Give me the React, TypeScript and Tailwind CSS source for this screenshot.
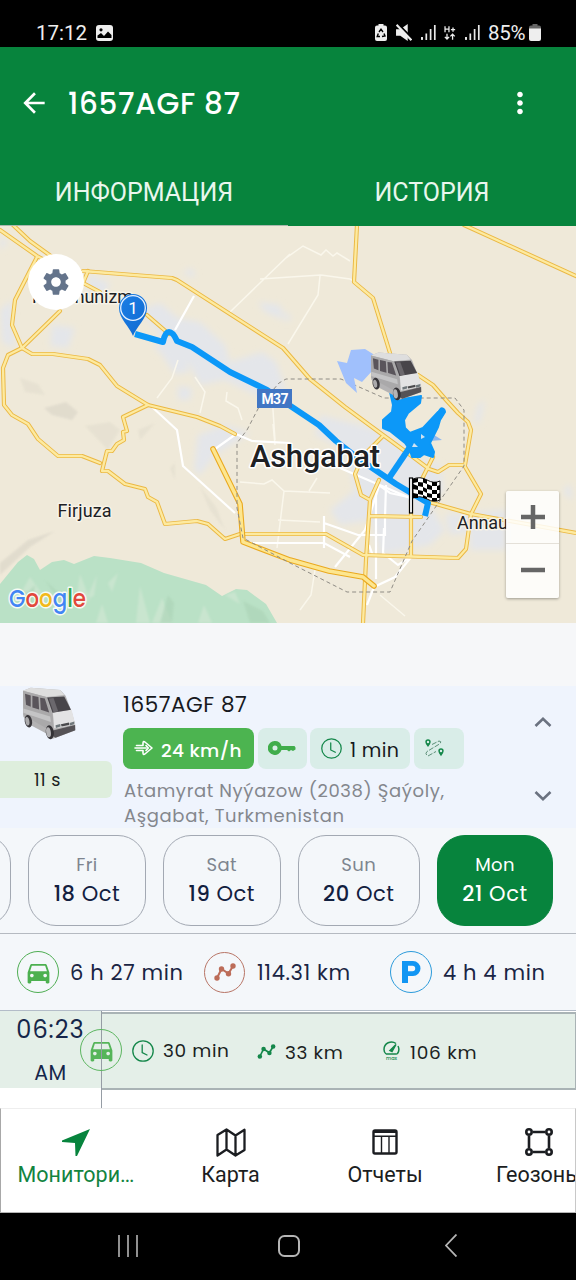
import React from "react";
import { MdArrowBack, MdDirectionsCar, MdMoreVert, MdNearMe, MdSettings } from "react-icons/md";

const POPPINS = "font-[Poppins,Inter,sans-serif]";

function Van({ className }: { className?: string }) {
  return (
    <svg className={className} viewBox="66 36 161 158" preserveAspectRatio="none">
      <path d="M69 47 L92 38 L180 45 L196 62 L214 110 L225 150 L224 166 L158 190 L133 172 L88 148 L70 125Z" fill="#b4b3b4" />
      <path d="M69 47 L92 38 L180 45 L192 60 L139 66Z" fill="#dedede" />
      <path d="M139 66 L160 130 L158 165 L140 160 L70 120 L69 47Z" fill="#aaa9aa" />
      <path d="M70 100 L150 124 L152 140 L70 113Z" fill="#c4c4c5" />
      <path d="M158 112 L214 104 L225 148 L162 160Z" fill="#e3e3e4" />
      <path d="M141 67 L192 64 L212 104 L157 113Z" fill="#48454a" />
      <path d="M146 70 L160 69 L174 109 L160 111Z" fill="#6b686d" />
      <path d="M75 56 L92 61 L92 95 L78 89Z M97 62 L115 66 L117 103 L97 97Z M120 68 L134 70 L147 112 L122 104Z" fill="#5a555b" />
      <path d="M166 150 L180 146 L181 154 L167 158Z M208 143 L222 139 L222 147 L209 151Z" fill="#6f777b" />
      <path d="M182 147 L206 142 L207 149 L184 154Z" fill="#4a4a4d" />
      <path d="M158 166 L224 149 L225 165 L166 187 L157 181Z" fill="#555256" />
      <ellipse cx="85" cy="138" rx="11" ry="19" fill="#38363a" transform="rotate(-10 85 138)" />
      <ellipse cx="82" cy="138" rx="6" ry="13" fill="#aaa9ab" transform="rotate(-10 82 138)" />
      <ellipse cx="149" cy="171" rx="12" ry="21" fill="#343236" transform="rotate(-8 149 171)" />
      <ellipse cx="145" cy="171" rx="7" ry="15" fill="#b5b4b6" transform="rotate(-8 145 171)" />
    </svg>
  );
}

const ROADS = [
  "M0 230L37 256L52 264", "M13 225L30 241L55 259", "M83 271L172 278L177 280L283 348L290 356L310 379L345 407L368 424L413 457L429 469L438 472L449 465L464 465L481 494L471 514L466 549L458 558L363 555L326 534L244 534",
  "M83 283L100 292M147 315L169 334M83 283L88 271", "M37 257L15 300L12 325L22 348L60 311", "M22 348L8 355L3 368L4 405L12 415L28 424L38 439L58 456L82 456L100 463",
  "M22 348L32 354L53 354L88 359L100 365L117 386L148 405L197 417L220 426L235 434",
  "M148 405L123 417L127 431L123 432L124 440L117 444L112 451L107 451L102 471L108 471L125 484L145 489L148 497L157 502L165 524L197 521L208 524L225 539L240 534",
  "M357 225L354 282L373 298L390 353M418 375L433 385L447 401L458 413L468 422L471 430L465 465", "M464 225L576 276", "M429 502L471 514L576 533",
  "M383 436L363 456L355 474L361 495L370 500M379 480L370 500L366 560L363 623M369 516L421 517M411 500V556M433 457L421 481",
];

const ARTERIES = [
  "M213 449L240 504L243 542L290 560L329 571L363 577L374 586", 
];

const WHITE_ROADS = [
  "M194 296L175 330", "M151 406L177 430L183 466L235 513", "M215 449L236 434L252 441L290 443", "M244 543L324 543L350 557", "M340 468L375 483L410 498M379 486L365 530L335 567", "M376 486V579M376 483L390 493L408 497M324 523L358 535H385V518L386 485M324 516V548M369 545L373 556M383 553L398 565L412 556",
  "M384 528L383 554M374 587L395 577L412 556M374 587L367 605",
];

const THIN = [
  "M290 254L230 312M260 279L321 275L350 279L354 281M286 258L303 246L321 255L326 250L333 256L337 253L350 261M320 276L318 295L288 344",
  "M178 360L172 378L157 398M195 377L205 392L200 413M227 392L226 401L238 408L242 420", "M272 395L275 440M275 445L273 424M240 482L264 484L272 480L284 491L330 493M284 491L277 548M278 520L320 522M309 491L317 478",
  "M315 570L311 595L300 610M380 595L405 616",
];

function CityMap() {
  return (
    <svg className="block h-[397px] w-full" viewBox="0 226 576 397">
      <defs>
        <filter id="soft"><feGaussianBlur stdDeviation="3" /></filter>
        <filter id="soft2"><feGaussianBlur stdDeviation="1.2" /></filter>
        <linearGradient id="pin" x2="1" y2="1"><stop stopColor="#1c7fe6" /><stop offset="1" stopColor="#0f69d0" /></linearGradient>
      </defs>
      <rect y="226" width="576" height="397" fill="#efe9d9" />
      <g fill="#e4e6ea" filter="url(#soft)">
        <path d="M0 236L8 243L0 250Z M0 310L12 300L14 348L2 342Z M52 325L75 328L68 348L50 346Z M88 275L110 283L104 296L88 290Z" />
        <path d="M140 310L160 303L178 318L200 322L225 345L230 362L262 352L276 362L286 390L262 398L225 380L200 385L190 365L155 350L160 335Z M160 352L185 360L190 372L175 374Z M178 386L192 388L190 400L178 400Z" />
        <path d="M258 302L280 305L284 320L265 312Z M283 310L292 318L286 322Z M182 273L192 268L196 278Z M198 435L225 425L250 433L215 455L200 475L194 470Z" />
        <path d="M320 415L360 425L390 435L420 460L440 465L444 490L430 505L445 530L430 545L380 555L372 520L340 525L330 510L355 490L345 450L315 435Z" />
        <path d="M445 515L506 510V550H470V532L450 535Z M478 405L485 400L480 422L474 424Z M564 489L570 484L573 500L565 495Z" />
      </g>
      <g fill="#ddd8ca" filter="url(#soft2)" opacity=".75">
        <path d="M20 378L38 384L45 395L25 392Z M85 426L110 422L120 430L108 450Z M200 487L216 507L225 530L210 510Z M138 430L155 423L140 440Z M170 468L175 463V480Z" opacity=".6" />
        <path d="M44 408L66 402L78 412L72 420L52 415Z M0 563L28 540L55 531L30 547L0 575Z" />
      </g>
      <path d="M0 584L18 562L27 555L34 559L40 570L52 562L64 560L74 564L94 556L110 558L141 563L164 573L206 585L222 596L236 589L247 590L266 604L277 623H0Z" fill="#bae1c6" />
      <path d="M30 577L42 594L22 591Z M80 574L90 600L75 606Z M118 573L112 592L108 583Z M97 575L86 600L94 596Z M140 586L150 623H136Z M162 598L172 623H152Z M102 604L108 623H96Z M204 605L212 623H198Z M225 595L240 604L235 592Z" fill="#c9e5cf" filter="url(#soft2)" />
      <path d="M45 580L60 603L66 600Z M168 595L174 603L172 623H160Z M243 601L263 611L270 623H250Z M20 600L35 585L32 605Z" fill="#abd3b6" filter="url(#soft2)" opacity=".6" />

      {THIN.map((d) => <path key={d} d={d} fill="none" stroke="#faf7ec" strokeWidth="1.500" />)}
      {WHITE_ROADS.map((d) => <path key={d} d={d} fill="none" stroke="#ffffff" strokeWidth="2.200" />)}
      <g fill="none" strokeLinejoin="round" strokeLinecap="round">
        {ROADS.map((d) => <path key={d} d={d} stroke="#ebb843" strokeWidth="4.200" />)}
        {ROADS.map((d) => <path key={d} d={d} stroke="#fdeaa0" strokeWidth="2.300" />)}
        {ARTERIES.map((d) => <path key={d} d={d} stroke="#eaa91f" strokeWidth="5.600" />)}
        {ARTERIES.map((d) => <path key={d} d={d} stroke="#fde68f" strokeWidth="3.400" />)}
      </g>
      <path d="M247 430L260 405L279 383L286 379H341L384 398H455L464 410V466L412 541L390 592H347L290 563L243 538L237 508V443L247 430" fill="none" stroke="#8f8c85" strokeWidth="1" strokeDasharray="4 3" />

      <path d="M337 361L347 363L351 350L365 349L373 354V370L362 382L354 378L357 393L346 383Z" fill="#a0c0fc" />
      <path d="M431 433L442 440L430 441Z" fill="#8fb8ef" />

      <g fill="none" stroke="#0c98f8" strokeWidth="6" strokeLinejoin="round">
        <path d="M135 334L163 342Q165 332 169 332T177 341L192 347L230 372L267 390L286 403L319 425L336 441L359 459L396 484L428 503L425 516" />
        <path d="M389 478L410 447" />
        <path d="M442 411L425 438M432 425L420 440" strokeWidth="7" strokeLinecap="round" />
      </g>
      <path d="M390 392L393 405L392 412L383 420L383 428L390 431L405 443L410 450L412 457L420 457L424 454L433 457L434 452L430 443L438 427L440 420L445 412L443 409L438 412L423 428L410 433L405 428L404 420L408 413L420 403L421 396L398 400Z" fill="#0c98f8" stroke="#0c98f8" strokeWidth="2" strokeLinejoin="round" />
      <path d="M414 443L418 447H412Z M421 434L425 437L421 439Z" fill="#cfe2f2" />

      <g className="font-[Roboto,sans-serif]" fill="#202124" stroke="#f7f3e8" strokeWidth="3" strokeLinejoin="round" paintOrder="stroke">
        <text x="32" y="303" fontSize="18" textLength="101">Kommunizm</text>
        <text x="57.500" y="517" fontSize="18" textLength="54">Firjuza</text>
        <text x="457" y="529" fontSize="18" textLength="51">Annau</text>
        <text x="250" y="467" fontSize="31" fontWeight="500" textLength="130" stroke="#ffffff">Ashgabat</text>
      </g>

      <rect x="257" y="389" width="35" height="19" fill="#4176c4" />
      <text x="261.500" y="404" className="font-[Roboto,sans-serif]" fontSize="14" fontWeight="700" fill="#fff" textLength="27">M37</text>

      <path d="M133 336C130 327 119 319 119 308A14 14 0 0 1 147 308C147 319 136 327 133 336Z" fill="url(#pin)" />
      <circle cx="133" cy="308" r="12.300" fill="none" stroke="#e6f1ff" strokeWidth="1.300" />
      <text x="133" y="314" className="font-[Roboto,sans-serif]" fontSize="17" fill="#fff" textAnchor="middle">1</text>

      <circle cx="56" cy="282" r="28" fill="#fff" />

      <g>
        <rect x="409.500" y="478" width="3" height="35" fill="#fff" stroke="#000" strokeWidth="1.200" />
        <path d="M413 479Q420 476 427 480T440 481V500Q434 503 427 499T413 498Z" fill="#fff" stroke="#111" strokeWidth="1" />
        <path d="M413 479L418 478V482L413 483ZM423 478L427 480V484L423 482.500ZM432 482L437 482V486L432 486ZM418 482L423 482.500V487L418 486ZM427 484L432 486V490L427 489ZM437 486L440 485V490L437 490ZM413 484L418 486V490L413 489ZM423 487L427 489V493L423 491ZM432 490H437V494H432ZM418 490L423 491V495L418 494ZM427 493L432 494V498L427 497ZM437 494L440 493V498L437 498ZM413 493L418 494V498L413 498ZM423 495L427 497V499L423 498ZM432 498H437V501L432 501Z" fill="#000" />
      </g>

      <g className="font-[Poppins,sans-serif]" fontSize="24" fontWeight="500" stroke="#f6fbf4" strokeWidth="3" strokeLinejoin="round" paintOrder="stroke">
        <text x="9" y="607" textLength="77" lengthAdjust="spacingAndGlyphs">
          <tspan fill="#4285f4">G</tspan><tspan fill="#e2483c">o</tspan><tspan fill="#f2b91b">o</tspan><tspan fill="#4285f4">g</tspan><tspan fill="#34a853">l</tspan><tspan fill="#e2483c">e</tspan>
        </text>
      </g>
    </svg>
  );
}

function Bars() {
  return (
    <svg className="h-[16px] w-[15px]" viewBox="0 0 15 16">
      <path d="M1 13v3M5.300 9.500V16M9.600 5V16M13.800 1V16" stroke="#e8e8e8" strokeWidth="1.700" />
      <path d="M0 14.200h2" stroke="#e8e8e8" strokeWidth="2" />
    </svg>
  );
}

function StatusBar() {
  return (
    <div className="flex h-[47px] shrink-0 items-start bg-black pl-[36px] pr-[35px] pt-[19.500px] font-[Roboto,sans-serif] text-[20.500px] leading-[26px] text-[#eeeeee]">
      <span className="w-[60px] whitespace-nowrap">17:12</span>
      <svg className="mt-[5px] h-[16px] w-[17px]" viewBox="0 0 17 16">
        <rect width="17" height="16" rx="3" fill="#eee" />
        <circle cx="5" cy="4.800" r="1.600" fill="#000" />
        <path d="M1.500 13V10.500L5 8L8 11L12 6.500L15.500 10V13Z" fill="#000" />
      </svg>
      <div className="ml-auto flex items-start">
        <svg className="mt-[4px] h-[17px] w-[12px]" viewBox="0 0 12 17">
          <path d="M3.500 1.500V0h5v1.500H10a2 2 0 0 1 2 2V15a2 2 0 0 1-2 2H2a2 2 0 0 1-2-2V3.500a2 2 0 0 1 2-2Z" fill="#eee" />
          <path d="M4 8L6 5.200L8 8M9 9.500L10 12L7 12.500M5 12.500H2.200L3.300 9.500" fill="none" stroke="#000" strokeWidth="1.400" />
        </svg>
        <svg className="ml-[9px] mt-[4px] h-[17px] w-[16px]" viewBox="0 0 15 16">
          <path d="M0 5H4L11 0V16L4 11H0Z" fill="#eee" />
          <path d="M1.500 -.5L16 14.500" stroke="#000" strokeWidth="2" />
          <path d="M.5 .8L14.500 15.200" stroke="#eee" strokeWidth="2" />
        </svg>
        <div className="ml-[9px] mt-[4px]"><Bars /></div>
        <svg className="ml-[8px] mt-[5px] h-[16px] w-[12px]" viewBox="0 0 14 16">
          <path d="M1.200 0V7M5.800 0V7M1.200 3.500H5.800M8 4H13M10.500 1.500V6.500M3.500 9V15M1 12.500L3.500 15.200L6 12.500M10 16V9.500M7.500 12L10 9.300L12.500 12" fill="none" stroke="#eee" strokeWidth="1.500" />
        </svg>
        <div className="ml-[9px] mt-[4px]"><Bars /></div>
        <span className="ml-[8px] w-[41px] whitespace-nowrap tracking-[-0.300px]">85%</span>
        <svg className="mt-[4px] h-[17px] w-[12px]" viewBox="0 0 12 17">
          <path d="M3.500 0h5v1.500H10a2 2 0 0 1 2 2V6H0V3.500a2 2 0 0 1 2-2h1.500Z" fill="#666" />
          <path d="M0 4.500H12V15a2 2 0 0 1-2 2H2a2 2 0 0 1-2-2Z" fill="#eee" />
        </svg>
      </div>
    </div>
  );
}

function Header() {
  return (
    <header className="flex h-[179px] shrink-0 flex-col bg-[#07843d] text-white">
      <div className="flex h-[112px] items-center">
        <MdArrowBack className="ml-[18px] size-[32px]" />
        <h1 className={`${POPPINS} ml-[18px] mt-[3px] whitespace-nowrap text-[29.500px] font-medium tracking-[0.650px]`}>1657AGF 87</h1>
        <MdMoreVert className="ml-auto mr-[39px] size-[34px]" />
      </div>
      <div className="grid h-[67px] grid-cols-2 font-[Roboto,sans-serif] text-[25px] text-[#e9f7ee]">
        <div className="flex items-center justify-center border-b-[1.500px] border-[#aab9ae] pt-[2px]">ИНФОРМАЦИЯ</div>
        <div className="flex items-center justify-center pt-[1px]">ИСТОРИЯ</div>
      </div>
    </header>
  );
}

function MapSection() {
  return (
    <section className="relative h-[397px] shrink-0 overflow-hidden">
      <CityMap />
      <MdSettings className="absolute left-[40px] top-[40px] size-[32px] text-[#64748b]" />
      <Van className="absolute left-[370px] top-[126px] h-[49px] w-[52px]" />
      <div className="absolute left-[506px] top-[265px] flex h-[107px] w-[53px] flex-col rounded-[2px] bg-white/85 shadow-[0_1px_3px_rgba(0,0,0,0.35)]">
        <div className="flex flex-1 items-center justify-center border-b border-[#e4e0d8]">
          <svg className="size-[24px]" viewBox="0 0 24 24"><path d="M12 0V24M0 12H24" stroke="#666" strokeWidth="4.500" /></svg>
        </div>
        <div className="flex flex-1 items-center justify-center pb-[2px]">
          <svg className="size-[24px]" viewBox="0 0 24 24"><path d="M0 12H24" stroke="#666" strokeWidth="4.500" /></svg>
        </div>
      </div>
    </section>
  );
}

function Clock({ className }: { className: string }) {
  return (
    <svg className={className} viewBox="0 0 22 22" fill="none" stroke="#14874a" strokeWidth="1.300" strokeLinecap="round">
      <circle cx="11" cy="11" r="10.200" />
      <path d="M10.200 5V12.500L15 15" />
    </svg>
  );
}

function Chevron({ up }: { up?: boolean }) {
  return (
    <svg className="h-[10px] w-[18px]" viewBox="0 0 18 10">
      <path d={up ? "M1.500 9L9 1.800L16.500 9" : "M1.500 1L9 8.200L16.500 1"} fill="none" stroke="#6b7280" strokeWidth="2.600" />
    </svg>
  );
}

function VehicleCard() {
  return (
    <section className={`${POPPINS} flex h-[142px] shrink-0 bg-[#eff4fd]`}>
      <div className="flex w-[112px] shrink-0 flex-col">
        <Van className="ml-[22px] mt-[1px] h-[53px] w-[54px]" />
        <div className="mt-[21px] flex h-[37px] items-center rounded-r-[6px] bg-[#deeedd] pl-[34px] pt-[2px] text-[17.500px] tracking-[0.500px] text-[#1b1f23]">11 s</div>
      </div>
      <div className="ml-[11px] flex w-[345px] shrink-0 flex-col">
        <h2 className="mt-[5px] h-[27px] whitespace-nowrap text-[21.500px] leading-[27px] tracking-[0.550px] text-[#17191d]">1657AGF 87</h2>
        <div className="mt-[10px] flex h-[42px] gap-[3.500px]">
          <div className="flex w-[131px] items-center rounded-[8px] bg-[#4cb450] pl-[11px] text-white">
            <svg className="h-[16px] w-[19px]" viewBox="0 0 19 16" fill="none" stroke="#fff" strokeWidth="1.600" strokeLinejoin="round" strokeLinecap="round">
              <path d="M4 5.500H9V3Q9 .2 11.500 2.500L18 8L11.500 13.500Q9 15.800 9 13V10.500H4M1 8H12M12 5.500L14.300 8L12 10.500M2.500 5.500H4M2.500 10.500H4" />
            </svg>
            <span className="ml-[8px] mt-[6px] whitespace-nowrap text-[18.500px] font-medium tracking-[0.350px]">24 km/h</span>
          </div>
          <div className="flex w-[49px] items-center justify-center rounded-[8px] bg-[#d9ede8]">
            <svg className="h-[14px] w-[28px]" viewBox="0 0 28 14" fill="#40ad4b">
              <path fillRule="evenodd" d="M7 0A7 7 0 0 1 13.500 5H26.500L27.500 6.500V8.500L25 10L23 9L21 10.500L19 9H13.500A7 7 0 1 1 7 0ZM7 4.500A2.500 2.500 0 1 0 7 9.500A2.500 2.500 0 1 0 7 4.500Z" />
            </svg>
          </div>
          <div className="flex w-[100px] items-center rounded-[8px] bg-[#d9ede8] pl-[11px]">
            <Clock className="size-[21px]" />
            <span className="ml-[8px] mt-[6px] whitespace-nowrap text-[19px] tracking-[0.350px] text-[#16181c]">1 min</span>
          </div>
          <div className="flex w-[50px] items-center rounded-[8px] bg-[#d9ede8] pl-[11px]">
            <svg className="h-[18px] w-[19px]" viewBox="0 0 19 18" fill="none">
              <path fillRule="evenodd" d="M3 8Q.3 5 .3 3A2.700 2.700 0 0 1 5.700 3Q5.700 5 3 8ZM3 1.800A1.200 1.200 0 1 0 3 4.200A1.200 1.200 0 1 0 3 1.800ZM16 17.200Q13.300 14 13.300 12A2.700 2.700 0 0 1 18.700 12Q18.700 14 16 17.200ZM16 10.800A1.200 1.200 0 1 0 16 13.200A1.200 1.200 0 1 0 16 10.800Z" fill="#14874a" />
              <path d="M7 5.500L14 2Q17.500 2.500 14.500 5L2 12.500Q-.5 15 3 17L11 12.500" stroke="#5c8f78" strokeWidth="1" strokeDasharray="5 1.500" />
            </svg>
          </div>
        </div>
        <p className="mt-[9.500px] whitespace-nowrap pl-[1px] text-[18px] leading-[25px] tracking-[0.620px] text-[#84878d]">
          Atamyrat Nyýazow (2038) Şaýoly,<br />Aşgabat, Turkmenistan
        </p>
      </div>
      <div className="ml-auto mr-[24px] flex flex-col pt-[31px]">
        <Chevron up />
        <div className="h-[64px]" />
        <Chevron />
      </div>
    </section>
  );
}

function Day({ name, day, width, active }: { name: string; day: string; width: string; active?: boolean }) {
  return (
    <div className={`${width} flex h-[91px] shrink-0 flex-col items-center rounded-[28px] border-[1.500px] pt-[16px] ${active ? "border-[#07843d] bg-[#07843d] text-white" : "border-[#a3a9b3] text-[#12203f]"}`}>
      <span className={`h-[26px] text-[18px] leading-[26px] tracking-[0.400px] ${active ? "text-white" : "text-[#7e858f]"}`}>{name}</span>
      <span className="mt-[2px] whitespace-nowrap text-[21px] leading-[28px] tracking-[0.550px]"><b className="font-medium">{day}</b> Oct</span>
    </div>
  );
}

function DayStrip() {
  return (
    <section className={`${POPPINS} flex h-[106px] shrink-0 overflow-hidden border-b border-[#b5bac1] bg-[#f4f7fa] pt-[7px]`}>
      <div className="ml-[-107px] h-[91px] w-[118px] shrink-0 rounded-[28px] border-[1.500px] border-[#a3a9b3]" />
      <div className="ml-[17px] flex gap-[17px]">
        <Day name="Fri" day="18" width="w-[118px]" />
        <Day name="Sat" day="19" width="w-[117.500px]" />
        <Day name="Sun" day="20" width="w-[122.500px]" />
        <Day name="Mon" day="21" width="w-[116px]" active />
      </div>
    </section>
  );
}

function Route({ className }: { className: string }) {
  return (
    <svg className={className} viewBox="0 0 22 18" fill="currentColor">
      <path d="M3 15L7.500 6L14.500 10.500L19 3" fill="none" stroke="currentColor" strokeWidth="2" />
      <circle cx="3" cy="15" r="2.700" /><circle cx="7.500" cy="6" r="2.700" /><circle cx="14.500" cy="10.800" r="2.700" /><circle cx="19" cy="3" r="2.700" />
    </svg>
  );
}

function Stats() {
  return (
    <section className={`${POPPINS} flex h-[77px] shrink-0 items-center border-b border-[#b3bcc8] bg-[#f4f7fa] text-[21px] tracking-[0.620px] text-[#1a2544]`}>
      <div className="ml-[17px] flex size-[42px] items-center justify-center rounded-full border-[1.500px] border-[#4fae53]">
        <MdDirectionsCar className="size-[29px] text-[#4cb050]" />
      </div>
      <span className="ml-[11px] mt-[1px] w-[123px] whitespace-nowrap">6 h 27 min</span>
      <div className="ml-[11px] flex size-[41px] items-center justify-center rounded-full border-[1.500px] border-[#b87566]">
        <Route className="h-[18px] w-[22px] text-[#bc6c58]" />
      </div>
      <span className="ml-[12px] mt-[1px] w-[124px] whitespace-nowrap">114.31 km</span>
      <div className="ml-[9px] flex size-[42px] items-center justify-center rounded-full border-[1.500px] border-[#2c9bdb]">
        <svg className="h-[22px] w-[19px]" viewBox="0 0 19 22"><path fillRule="evenodd" d="M0 0H11A7.500 7.500 0 0 1 11 15H6V22H0ZM6 4.800V10.200H10.500A2.700 2.700 0 0 0 10.500 4.800Z" fill="#1296f3" /></svg>
      </div>
      <span className="ml-[11px] mt-[1px] whitespace-nowrap">4 h 4 min</span>
    </section>
  );
}

function Timeline() {
  return (
    <section className={`${POPPINS} relative flex h-[97px] shrink-0 bg-white`}>
      <div className="flex h-[77px] w-[101px] shrink-0 flex-col items-center bg-[#e4efe8] text-[#15264a]">
        <span className="h-[38px] text-[24px] leading-[38px] tracking-[1px]">06:23</span>
        <span className="mt-[7px] text-[20.500px] leading-[34px] tracking-[0.500px]">AM</span>
      </div>
      <div className="h-full flex-1 border-l border-[#969da5]">
        <div className="mt-[1px] flex h-[78px] items-center border-y-2 border-r border-[#a9b3b5] bg-[#e4efe8] text-[18.500px] tracking-[0.600px] text-[#1b1f23]">
          <Clock className="ml-[30px] size-[22px]" />
          <span className="ml-[9px] w-[66px] whitespace-nowrap">30 min</span>
          <Route className="ml-[28px] h-[15px] w-[19px] text-[#14874a]" />
          <span className="ml-[9px] mt-[4px] w-[58px] whitespace-nowrap">33 km</span>
          <svg className="ml-[40px] mt-[-2px] h-[19px] w-[17px]" viewBox="0 0 17 19" fill="none" stroke="#14874a" strokeWidth="1.500">
            <path d="M3 13Q1 11.500 1 8.500A7.500 7.500 0 0 1 13 2.500M15 5Q17 9 14.500 12.500Q14 13 13 13H3" />
            <path d="M7 9.500L13 3.500L9 10.500Z" fill="#14874a" />
            <text x="3" y="18.500" fontSize="5" letterSpacing="0" stroke="none" fill="#14874a" fontWeight="500">max</text>
          </svg>
          <span className="ml-[10px] mt-[4px] whitespace-nowrap tracking-[0.750px]">106 km</span>
        </div>
      </div>
      <div className="absolute left-[80px] top-[18px] flex size-[42px] items-center justify-center rounded-full border-[1.500px] border-[#5db661]">
        <MdDirectionsCar className="size-[29px] text-[#55b559]" />
        <div className="absolute left-[20px] top-0 h-[39px] w-px bg-[#969da5]" />
      </div>
    </section>
  );
}

function NavItem({ icon, label, className }: { icon: React.ReactNode; label: string; className: string }) {
  return (
    <div className={`${className} flex shrink-0 flex-col items-center pt-[18px]`}>
      <div className="flex h-[30px] items-center">{icon}</div>
      <span className="mt-[4px] whitespace-nowrap leading-[28px]">{label}</span>
    </div>
  );
}

function BottomNav() {
  return (
    <nav className="flex h-[105px] shrink-0 overflow-hidden border border-t-[#eeeeee] border-b-[#b5b5b5] border-l-[#a8a8a8] border-r-[#c8c8c8] bg-white font-[Roboto,sans-serif] text-[21.500px] text-[#1b1d21]">
      <NavItem className="w-[150px] text-[#12843f]" label="Монитори…" icon={<svg className="h-[27px] w-[28px]" viewBox="0 0 28 27"><path d="M28 0L15 27H13.500L13 14L0 13V11.500Z" fill="#07843d" /></svg>} />
      <NavItem className="w-[159px]" label="Карта" icon={
        <svg className="h-[29px] w-[30px]" viewBox="0 0 30 29" fill="none" stroke="#1b1d21" strokeWidth="2.300" strokeLinejoin="round">
          <path d="M1.500 7L10.500 1.500L19.500 7.500L28.500 1.800V22L19.500 27.500L10.500 21.500L1.500 27.500ZM10.500 1.500V21.500M19.500 7.500V27.500" />
        </svg>} />
      <NavItem className="w-[150px]" label="Отчеты" icon={
        <svg className="h-[26px] w-[26px]" viewBox="0 0 26 26" fill="none" stroke="#1b1d21">
          <rect x="1.500" y="1.500" width="23" height="23" rx="1.500" strokeWidth="2.400" />
          <path d="M1 2.500H25" strokeWidth="3" /><path d="M1 7.200H25M9.500 7V25M17 7V25" strokeWidth="1.400" />
        </svg>} />
      <NavItem className="w-[158px]" label="Геозоны" icon={
        <svg className="h-[28px] w-[28px]" viewBox="0 0 28 28" fill="none" stroke="#1b1d21" strokeWidth="2.600">
          <path d="M8 4H20M8 24H20M4 8V20M24 8V20" />
          <circle cx="4" cy="4" r="2.700" /><circle cx="24" cy="4" r="2.700" /><circle cx="4" cy="24" r="2.700" /><circle cx="24" cy="24" r="2.700" />
        </svg>} />
    </nav>
  );
}

function SystemNav() {
  return (
    <div className="flex h-[67px] shrink-0 items-center bg-black pb-[2px] pl-[118px]">
      <svg className="h-[22px] w-[20px]" viewBox="0 0 20 22"><path d="M1 0V22M10 0V22M19 0V22" stroke="#b5b5b5" strokeWidth="1.600" /></svg>
      <svg className="ml-[140px] size-[22px]" viewBox="0 0 22 22"><rect x="1" y="1" width="20" height="20" rx="5.500" fill="none" stroke="#b5b5b5" strokeWidth="2" /></svg>
      <svg className="ml-[145px] h-[23px] w-[12px]" viewBox="0 0 12 23"><path d="M11.500 .5L1 11.500L11.500 22.500" fill="none" stroke="#b5b5b5" strokeWidth="1.800" /></svg>
    </div>
  );
}

export default function App() {
  return (
    <div className="flex h-[1280px] w-[576px] flex-col overflow-hidden bg-[#f5f7f9]">
      <StatusBar />
      <Header />
      <MapSection />
      <div className="h-[63px] shrink-0 bg-[#f6f7f9]" />
      <VehicleCard />
      <DayStrip />
      <Stats />
      <Timeline />
      <BottomNav />
      <SystemNav />
    </div>
  );
}
